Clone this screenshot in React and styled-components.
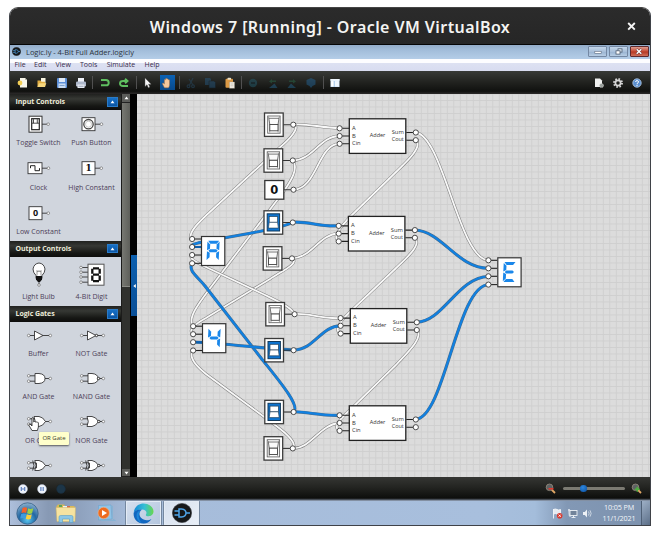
import React from "react";
import styled, { createGlobalStyle, css } from "styled-components";

const UI = `"Open Sans", "Noto Sans", sans-serif`;

const GlobalStyle = createGlobalStyle`
  * { box-sizing: border-box; }
  body { margin: 0; background: #fff; overflow: hidden; font-family: ${UI}; }
  svg { display: block; flex: none; }
`;

/* ---------- window frame ---------- */

const Stage = styled.div`
  width: 660px;
  height: 535px;
  padding: 7px 9px 9px 9px;
`;

const Frame = styled.div`
  width: 642px;
  height: 519px;
  border: 1px solid #3f4248;
  border-top-color: #454545;
  border-radius: 9px 9px 0 0;
  overflow: hidden;
  display: flex;
  flex-direction: column;
`;

const HostBar = styled.header`
  position: relative;
  flex: none;
  height: 37px;
  background: linear-gradient(#2b2b2b, #262626);
  border-bottom: 1px solid #050505;
  display: flex;
  align-items: center;
  justify-content: center;
  color: #f4f4f2;
`;

const HostTitle = styled.h1`
  margin: 0;
  padding-top: 2px;
  font: 600 16px/20px "Noto Sans", sans-serif;
  letter-spacing: ${(p) => p.$track}px;
  white-space: nowrap;
`;

const HostClose = styled.svg`
  position: absolute;
  right: 14px;
  top: 14px;
`;

const GuestBar = styled.div`
  flex: none;
  height: 14px;
  display: flex;
  align-items: center;
  padding: 0 1px 1px 2px;
  background: linear-gradient(#93acc9, #a3bedb 40%, #b4cde7);
`;

const GuestTitle = styled.span`
  margin-left: 5px;
  font: 400 7.5px/12px ${UI};
  letter-spacing: ${(p) => p.$track || 0}px;
  color: #2b3340;
  flex: 1;
  white-space: nowrap;
`;

const CaptionButtons = styled.div`
  display: flex;
  gap: 1.5px;
`;

const CaptionButton = styled.span`
  width: 19.3px;
  height: 11px;
  border: 1px solid ${(p) => (p.$danger ? "#5f2a2e" : "#7488a3")};
  border-radius: 1px;
  background: ${(p) =>
    p.$danger
      ? "linear-gradient(#dd9c8f, #c8513c 45%, #b63a25 55%, #d0705a)"
      : "linear-gradient(#c3d5e9, #a9c0da 50%, #9ab4d1 55%, #b7cde4)"};
  display: flex;
  align-items: center;
  justify-content: center;
`;

const MenuBar = styled.nav`
  flex: none;
  height: 12px;
  display: flex;
  align-items: center;
  padding-left: 4.5px;
  gap: 8.8px;
  background: linear-gradient(#fdfdff 0 30%, #dde1f2 35%, #d8dcf0);
`;

const MenuItem = styled.span`
  width: ${(p) => p.$w}px;
  font: 400 7px/12px ${UI};
  color: #3a2c4c;
  white-space: nowrap;
`;

/* ---------- toolbar ---------- */

const Toolbar = styled.div`
  flex: none;
  height: 23px;
  display: flex;
  align-items: center;
  padding: 0 3px 0 3.4px;
  background: linear-gradient(#383a37, #21221f 50%, #10110f 88%, #2c2a2a);
`;

const Tool = styled.span`
  width: 19.35px;
  height: 15px;
  display: flex;
  align-items: center;
  justify-content: center;
  opacity: ${(p) => (p.$off ? 0.42 : 1)};
  ${(p) =>
    p.$active &&
    css`
      width: 15.3px;
      margin: 0 2px;
      background: linear-gradient(#0c62b4, #07498c);
    `}
`;

const ToolRule = styled.i`
  width: 1px;
  height: 13px;
  margin: 0 1.7px;
  background: #505050;
`;

const Spacer = styled.span`
  flex: 1;
`;

/* ---------- body ---------- */

const Workspace = styled.main`
  flex: none;
  height: 383px;
  display: flex;
  background: #000;
`;

const Palette = styled.aside`
  position: relative;
  width: 111px;
  height: 383px;
  overflow: hidden;
  background: #d0d5dd;
`;

const SectionHead = styled.div`
  height: 16px;
  padding: 0 3px 0 5.5px;
  display: flex;
  align-items: center;
  justify-content: space-between;
  background: linear-gradient(#20211f, #363834 30%, #161714 75%, #0d0d0c);
  color: #ecebd9;
  font: 700 7px/14px ${UI};
  letter-spacing: -0.06px;
`;

const Collapse = styled.span`
  width: 11.5px;
  height: 9.5px;
  border: 0.5px solid #2b7bc7;
  background: linear-gradient(#1670c6, #0a55a4);
  display: flex;
  align-items: center;
  justify-content: center;
`;

const SectionGrid = styled.div`
  display: grid;
  grid-template-columns: 53px 53px;
  grid-auto-rows: ${(p) => p.$row}px;
  height: ${(p) => p.$h}px;
  padding-left: 2px;
`;

const Part = styled.figure`
  margin: 0;
  display: flex;
  flex-direction: column;
  align-items: center;
`;

const PartLabel = styled.figcaption`
  margin-top: ${(p) => p.$gap}px;
  font: 400 7px/9px ${UI};
  letter-spacing: 0;
  color: #4c4058;
  white-space: nowrap;
`;

const PointerHand = styled.svg`
  position: absolute;
  left: 18px;
  top: 322px;
`;

const Tooltip = styled.div`
  position: absolute;
  left: 29px;
  top: 338px;
  width: 30px;
  height: 13px;
  background: #ffffcb;
  border-radius: 1px;
  box-shadow: 0 1px 2px rgba(0, 0, 0, 0.6);
  font: 400 6px/13px ${UI};
  color: #3c3c30;
  text-align: center;
  white-space: nowrap;
`;

const ScrollTrack = styled.div`
  width: 9px;
  height: 383px;
  display: flex;
  flex-direction: column;
  background: #30312e;
  border-left: 1px solid #1c1c1b;
`;

const ScrollArrow = styled.span`
  height: ${(p) => p.$h}px;
  background: #5b5c59;
  border-bottom: 1px solid #222;
  display: flex;
  align-items: center;
  justify-content: center;
`;

const ScrollThumb = styled.span`
  height: 184px;
  background: linear-gradient(90deg, #777872, #5e5f5a);
  border-bottom: 1px solid #8a8b86;
`;

const Divider = styled.div`
  width: 7px;
  padding: 161px 0 0 1px;
`;

const DividerGrip = styled.span`
  width: 6px;
  height: 61px;
  display: flex;
  align-items: center;
  justify-content: center;
  background: linear-gradient(#0c5fae, #0a4f97);
`;

/* ---------- footer bars ---------- */

const PlayBar = styled.div`
  flex: none;
  height: 23px;
  display: flex;
  align-items: center;
  gap: 9.3px;
  padding: 0 8px 0 7.5px;
  background: linear-gradient(#353633, #232421 45%, #0d0e0c 92%, #5a6370);
`;

const ZoomGroup = styled.div`
  display: flex;
  align-items: center;
  gap: 6.5px;
`;

const SliderRail = styled.span`
  width: 62px;
  height: 2.5px;
  border-radius: 2px;
  background: #7b7a72;
  display: flex;
  align-items: center;
  padding-left: 17.5px;
`;

const SliderKnob = styled.i`
  width: 6.5px;
  height: 6.5px;
  border-radius: 50%;
  background: radial-gradient(circle at 40% 35%, #2d86dd, #0a4fa0);
`;

const TaskBar = styled.footer`
  flex: none;
  height: 25px;
  display: flex;
  align-items: center;
  border-top: 1px solid #8390a3;
  background: linear-gradient(90deg, #adbfdb, #8799b4 6%, #8c9fbb 10%, #a6bcda 19%, #a8bfdd 74%, #a4bddb 82%, #8298b5 87%, #7d92ae);
`;

const TaskSlot = styled.span`
  width: ${(p) => p.$w}px;
  height: 24px;
  display: flex;
  align-items: center;
  justify-content: center;
`;

const TaskButton = styled(TaskSlot)`
  margin-right: 1.8px;
  border: 1px solid #74879f;
  border-width: 0 1px;
  border-radius: 1px;
  background: linear-gradient(135deg, #d6e0ee, ${(p) => (p.$lit ? "#e9eff7" : "#b3c5de")});
  box-shadow: inset 0 0 0 1px #e3ebf5;
`;

const Tray = styled.div`
  display: flex;
  align-items: center;
  gap: 4px;
`;

const Clock = styled.div`
  width: 44px;
  margin-left: 4px;
  margin-bottom: 1px;
  text-align: center;
  color: #f3f6fa;
  font: 400 7.2px/10.3px ${UI};
  letter-spacing: -0.12px;
`;

const ShowDesktop = styled.span`
  width: 9px;
  height: 24px;
  border-left: 1px solid #4f6076;
  background: linear-gradient(135deg, #9dafc6, #5c6f88);
`;

/* ---------- small glyphs ---------- */

const UpMark = ({ flip, fill = "#fff" }) => (
  <svg width="5" height="4" viewBox="0 0 5 4">
    <path d={flip ? "M.5.8h4L2.5 3.4z" : "M.5 3.2h4L2.5.6z"} fill={fill} />
  </svg>
);

const toolArt = {
  fresh: (
    <>
      <path d="M3 1h5l2 2v7.500H3z" fill="#f8f6ea" />
      <path d="M8 1v2h2z" fill="#b9b9ae" />
      <circle cx="3" cy="6" r="2.400" fill="#f3cf55" />
    </>
  ),
  open: (
    <>
      <path d="M5 1h4.500v6H5z" fill="#f8f5e2" />
      <path d="M1.500 3.500h3l1 1.300H9V10H1.500z" fill="#e2ae42" />
      <path d="M1.500 10 3 6.300h7.300L9 10z" fill="#f7d77d" />
    </>
  ),
  save: (
    <>
      <rect x="1" y="1" width="10" height="10" rx="1" fill="#5d90d8" />
      <rect x="3" y="1" width="6" height="4" fill="#dfe9f6" />
      <rect x="2.500" y="6.500" width="7" height="4.500" fill="#c9dcf2" />
      <path d="M3.500 8.500h5" stroke="#6b90c0" strokeWidth=".8" />
    </>
  ),
  print: (
    <>
      <path d="M3 1h6v4H3z" fill="#eef1f8" />
      <rect x="1" y="4.500" width="10" height="5" rx="1.300" fill="#aeb8cb" />
      <path d="M2.500 7.500h7V11h-7z" fill="#e8ecf4" />
      <path d="M3.500 9.300h5" stroke="#79869c" strokeWidth=".7" />
    </>
  ),
  undo: <path d="M2 3h5q2.700 0 2.700 2.700T7 8.300H2" fill="none" stroke="#5fc060" strokeWidth="2" />,
  redo: <path d="M10 9H5Q2 9 2 6.500T5 4h4M7 1.800 9.500 4 7 6.200" fill="none" stroke="#5fc060" strokeWidth="1.900" />,
  arrow: <path d="M3 1v8.500l2-1.800 1.300 3 1.500-.7-1.300-2.800h2.700z" fill="#f5f5f5" stroke="#555" strokeWidth=".4" />,
  hand: (
    <path
      d="M3.500 10.800 1.600 7.300Q1 6 2.200 6l1.200 1V2.800q.6-1 1.200 0V1.700q.6-1 1.300 0v.5q.6-1 1.300 0V3q.7-.9 1.300 0v4.800q0 1.500-1 3z"
      fill="#f3c79c"
      stroke="#a96d3d"
      strokeWidth=".5"
    />
  ),
  cut: (
    <g fill="none" stroke="#2b5575" strokeWidth="1.200">
      <path d="M8 1 4.500 8M4 2l4 6" />
      <circle cx="3.500" cy="9.300" r="1.400" />
      <circle cx="8" cy="9.300" r="1.400" />
    </g>
  ),
  copy: (
    <g fill="#27618f">
      <path d="M1 1h5l1 1v6H1z" />
      <path d="M5 4h5l1.500 1.500V11H5z" stroke="#142532" strokeWidth=".6" />
    </g>
  ),
  paste: (
    <>
      <rect x="1.500" y="1.800" width="7.500" height="9" rx="1" fill="#dc9a45" />
      <rect x="3.500" y=".8" width="3.500" height="2" rx=".6" fill="#e9e0c8" />
      <path d="M5.500 5h5v6.300h-5z" fill="#f2f0e8" stroke="#9c9480" strokeWidth=".4" />
      <path d="M6.500 7h3M6.500 8.800h3" stroke="#b3ad9e" strokeWidth=".6" />
    </>
  ),
  minus: (
    <>
      <circle cx="6" cy="6" r="4.200" fill="#24667c" />
      <path d="M4 6h4" stroke="#0d1c28" strokeWidth="1.300" />
    </>
  ),
  rotL: (
    <g fill="#2a7350">
      <path d="M9 3.500H5V2L2 4.500 5 6.500V5h4z" />
      <path d="M2 11h8.500L7.500 6.500z" fill="#27709f" />
    </g>
  ),
  rotR: (
    <g fill="#2a7350">
      <path d="M3 3.500h4V2l3 2.500L7 6.500V5H3z" />
      <path d="M1.500 11h8.500L5 6.500z" fill="#27709f" />
    </g>
  ),
  cube: <path d="M6 1l4.500 2v4.500L7.500 9 6 11 4.500 9 1.500 7.500V3z" fill="#2470ab" />,
  panes: (
    <>
      <rect x="1.500" y="2" width="9" height="8" fill="#d5e8fa" />
      <rect x="1.500" y="2" width="9" height="1.800" fill="#eef6fd" />
      <rect x="2.200" y="4.200" width="2.600" height="5" fill="#fff" />
      <rect x="5.600" y="4.200" width="4.200" height="5" fill="#eef6fd" />
      <path d="M5.200 4v6" stroke="#8ab4df" strokeWidth=".7" />
    </>
  ),
  pageGear: (
    <>
      <path d="M2 1.500h5l2 2V10H2z" fill="#f0f1f0" />
      <circle cx="8.500" cy="8.500" r="2" fill="#9aa09c" stroke="#dadcda" strokeWidth=".8" strokeDasharray="1 .6" />
    </>
  ),
  gear: (
    <>
      <circle cx="6" cy="6" r="4" fill="none" stroke="#d6d6d6" strokeWidth="1.900" strokeDasharray="1.570 1.570" />
      <circle cx="6" cy="6" r="2.600" fill="none" stroke="#d6d6d6" strokeWidth="1.700" />
    </>
  ),
  help: (
    <>
      <circle cx="6" cy="6" r="4.200" fill="#5b8fd0" stroke="#b9d0ec" strokeWidth=".8" />
      <path d="M4.600 5q.1-1.400 1.500-1.400T7.500 5q0 .8-1.400 1.500v.8M6 8v1" fill="none" stroke="#fff" strokeWidth="1" />
    </>
  ),
};

const ToolButton = ({ art, active, off }) => (
  <Tool $active={active} $off={off}>
    <svg width="12" height="12" viewBox="0 0 12 12">
      {toolArt[art]}
    </svg>
  </Tool>
);

/* ---------- palette art, origin at the middle of each cell ---------- */

const ink = { stroke: "#343436", strokeWidth: 0.9 };

const Pin = ({ x, y }) => <circle cx={x} cy={y} r="1.300" fill="#fff" stroke="#555" strokeWidth=".6" />;

const GateFrame = ({ two, children, bubble }) => (
  <g>
    {two ? (
      <>
        <path d="M-9-2.700H-3M-9 2.700H-3" {...ink} />
        <Pin x={-10.3} y={-2.7} />
        <Pin x={-10.3} y={2.7} />
      </>
    ) : (
      <>
        <path d="M-9 0H-4" {...ink} />
        <Pin x={-10.3} y={0} />
      </>
    )}
    <path d={two ? "M5 0h5" : "M3 0h7"} {...ink} />
    <Pin x={11.3} y={0} />
    {children}
    {bubble != null && <circle cx={bubble} cy="0" r="1.200" fill="#fff" stroke="#222" strokeWidth=".9" />}
  </g>
);

const AndShape = <path d="M-4-5H0Q6-4.500 6 0T0 5H-4z" fill="#fff" {...ink} />;
const OrShape = <path d="M-5-5H0Q4-4.500 6.500 0 4 4.500 0 5H-5Q-2.500 0-5-5z" fill="#fff" {...ink} />;
const XorShape = (
  <>
    <path d="M-6.300-5Q-3.800 0-6.300 5" fill="none" {...ink} />
    <path d="M-4.200-5H0Q4-4.500 6.500 0 4 4.500 0 5H-4.200Q-1.700 0-4.200-5z" fill="#fff" {...ink} />
    <path d="M-2.500-2.700v5.400" fill="none" {...ink} />
  </>
);
const BufferShape = <path d="M-4.500-4.500 4 0-4.500 4.500z" fill="#fff" {...ink} />;

const ConstArt = ({ v }) => (
  <>
    <path d="M3 0h5" {...ink} />
    <Pin x={9.3} y={0} />
    <rect x="-10" y="-6.500" width="13" height="13" fill="#fff" {...ink} />
    <text x="-3.500" y="3.200" textAnchor="middle" fontSize="9" fontWeight="700" fontFamily={v === "1" ? "DejaVu Serif" : "Noto Sans"} fill="#111">
      {v}
    </text>
  </>
);

const partArt = {
  toggle: (
    <>
      <path d="M3 0h5" {...ink} />
      <Pin x={9.2} y={0} />
      <rect x="-10" y="-8" width="13" height="16" fill="#fff" stroke="#333" />
      <rect x="-7.300" y="-5.500" width="7.600" height="11" fill="#fff" stroke="#222" strokeWidth="1.200" />
      <path d="M-7-1h7M-5.500-5v4M-1.700-5v4" stroke="#222" strokeWidth=".8" />
    </>
  ),
  push: (
    <>
      <path d="M3 0h5" {...ink} />
      <Pin x={9.5} y={0} />
      <rect x="-10" y="-6.500" width="13" height="13" fill="#fff" {...ink} />
      <circle cx="-3.500" cy="0" r="4.700" fill="#fff" stroke="#444" strokeWidth="1.300" />
      <circle cx="-3.500" cy="0" r="3" fill="none" stroke="#aaa" strokeWidth=".6" />
    </>
  ),
  clock: (
    <>
      <path d="M3 0h5" {...ink} />
      <Pin x={9.5} y={0} />
      <rect x="-11" y="-5.500" width="14" height="11" fill="#fff" {...ink} />
      <path d="M-8.500 0v-2.500h4.500V2.500h4.500V0" fill="none" stroke="#222" strokeWidth="1" />
    </>
  ),
  one: <ConstArt v="1" />,
  zero: <ConstArt v="0" />,
  bulb: (
    <>
      <path d="M0 8v3" {...ink} />
      <Pin x={0} y={11.5} />
      <path d="M-3 2Q-6-1-6-4.500-5-10 0-10.500 5-10 6-4.500 6-1 3 2v3H-3z" fill="#fff" {...ink} />
      <path d="M-2 2v-5l1 1.500 1-1.500 1 1.500 1-1.500v5" fill="none" stroke="#555" strokeWidth=".6" />
      <path d="M-3 2.500h6V6L1 8.500h-2L-3 6z" fill="#111" />
    </>
  ),
  digit: (
    <>
      <path d="M-10-6h7M-10-1.300h7M-10 3.500h7M-10 8.700h7" {...ink} />
      {[-6, -1.3, 3.5, 8.7].map((y) => (
        <Pin key={y} x={-11} y={y} />
      ))}
      <rect x="-4" y="-9.300" width="16" height="21" fill="#fff" stroke="#555" />
      <g stroke="#111" strokeWidth="2.300" fill="none">
        <path d="M1-5.200h6M1 1.200h6M1 7.700h6" />
        <path d="M.3-4.700v5M7.700-4.700v5M.3 2v5.200M7.700 2v5.200" />
      </g>
    </>
  ),
  buffer: <GateFrame>{BufferShape}</GateFrame>,
  not: <GateFrame bubble={4.5}>{BufferShape}</GateFrame>,
  and: <GateFrame two>{AndShape}</GateFrame>,
  nand: <GateFrame two bubble={6.5}>{AndShape}</GateFrame>,
  or: <GateFrame two>{OrShape}</GateFrame>,
  nor: <GateFrame two bubble={6.8}>{OrShape}</GateFrame>,
  xor: <GateFrame two>{XorShape}</GateFrame>,
  xnor: <GateFrame two bubble={6.8}>{XorShape}</GateFrame>,
};

const sections = [
  {
    title: "Input Controls", row: 44.4, h: 130.5, icon: 28.4, gap: 0,
    parts: [["toggle", "Toggle Switch"], ["push", "Push Button"], ["clock", "Clock"], ["one", "High Constant"], ["zero", "Low Constant"]],
  },
  {
    title: "Output Controls", row: 49.5, h: 49.5, icon: 33, gap: 2.5,
    parts: [["bulb", "Light Bulb"], ["digit", "4-Bit Digit"]],
  },
  {
    title: "Logic Gates", row: 43.2, h: 200, icon: 27, gap: 0.2,
    parts: [
      ["buffer", "Buffer"], ["not", "NOT Gate"], ["and", "AND Gate"], ["nand", "NAND Gate"],
      ["or", "OR Gate"], ["nor", "NOR Gate"], ["xor"], ["xnor"],
    ],
  },
];

/* ---------- circuit ---------- */

const Wire = ({ d, on }) => (
  <g fill="none" strokeLinecap="round">
    <path d={d} stroke={on ? "#4a6b88" : "#838383"} strokeWidth={on ? 3.1 : 2.9} />
    <path d={d} stroke={on ? "#1180e0" : "#f8f8f8"} strokeWidth={on ? 2.2 : 1.8} />
  </g>
);

const Port = ({ x, y }) => <circle cx={x} cy={y} r="2.600" fill="#fff" stroke="#4a4a4a" strokeWidth="1" />;

const Toggle = ({ x, y, on }) => (
  <g>
    <path d={`M${x + 19} ${y + 12.2}h8`} stroke="#333" strokeWidth="1.100" />
    <rect x={x + 0.5} y={y + 0.5} width="18.700" height="23.400" fill="#fff" stroke="#3a3a3a" strokeWidth="1.300" />
    {on ? (
      <>
        <rect x={x + 3.7} y={y + 3.5} width="12.400" height="17.200" fill="#0d74d0" stroke="#123a5c" strokeWidth="1" />
        <rect x={x + 5.7} y={y + 6.3} width="8.400" height="5.700" fill="#fff" stroke="#26435c" strokeWidth=".7" />
        <path d={`M${x + 5.7} ${y + 12}h8.400l.8 5.800h-10z`} fill="#fff" stroke="#26435c" strokeWidth=".7" />
      </>
    ) : (
      <>
        <rect x={x + 3.7} y={y + 3.5} width="12.400" height="17.200" fill="#fff" stroke="#666" strokeWidth=".9" />
        <path d={`M${x + 4} ${y + 4}l1.700 2.500v13.500M${x + 15.8} ${y + 4}l-1.700 2.500v13.500`} fill="none" stroke="#777" strokeWidth=".7" />
        <path d={`M${x + 4.8} ${y + 5.8}h10.200l-1 6.200h-8.200z`} fill="#fafafa" stroke="#555" strokeWidth=".8" />
        <rect x={x + 5.8} y={y + 12} width="8.200" height="6.300" fill="#fff" stroke="#444" strokeWidth=".9" />
      </>
    )}
    <Port x={x + 29.3} y={y + 12.2} />
  </g>
);

const Adder = ({ x, y }) => (
  <g fontFamily="Open Sans" fontSize="5.800" fill="#333">
    <path d={`M${x - 8} ${y + 9.5}h8M${x - 8} ${y + 17.2}h8M${x - 8} ${y + 25}h8M${x + 57} ${y + 13.7}h8M${x + 57} ${y + 21.4}h8`} stroke="#222" strokeWidth="1.100" />
    <rect x={x} y={y} width="56.500" height="34.600" fill="#fff" stroke="#222" strokeWidth="1.300" />
    <text x={x + 2.7} y={y + 10.8}>A</text>
    <text x={x + 2.7} y={y + 18.8}>B</text>
    <text x={x + 2.7} y={y + 26.2}>Cin</text>
    <text x={x + 28.3} y={y + 18.6} textAnchor="middle" fontSize="5.500">Adder</text>
    <text x={x + 54.5} y={y + 15.1} textAnchor="end">Sum</text>
    <text x={x + 54.5} y={y + 22.6} textAnchor="end" fontSize="5.500">Cout</text>
    {[9.5, 17.2, 25].map((dy) => (
      <Port key={dy} x={x - 9.7} y={y + dy} />
    ))}
    {[13.7, 21.4].map((dy) => (
      <Port key={dy} x={x + 66.5} y={y + dy} />
    ))}
  </g>
);

/* Seven segments, clockwise from the top, then the middle bar. */
const segments = {
  a: "M1 0h11l-2.300 3H3.300z",
  b: "M12.500.8v8.700L9.700 8V3.700z",
  c: "M12.500 10.500v8.700L9.700 16.500v-4.500z",
  d: "M1 20h11l-2.300-3H3.300z",
  e: "M.3 10.500v8.700l2.900-2.700v-4.500z",
  f: "M.3.800v8.700L3.200 8V3.700z",
  g: "M1.700 10 3.200 8.500h6.300l1.500 1.500-1.500 1.500H3.200z",
};

const Digit = ({ x, y, lit, active = [] }) => (
  <g>
    {[3, 11, 19, 27.3].map((dy, i) => (
      <path key={dy} d={`M${x - 7} ${y + dy}h7`} stroke={active.includes(i) ? "#0d5fae" : "#222"} strokeWidth={active.includes(i) ? 2 : 1.1} />
    ))}
    <rect x={x + 0.5} y={y + 0.5} width="23.300" height="29" fill="#fff" stroke="#333" strokeWidth="1.200" />
    <g transform={`translate(${x + 6.2} ${y + 4.8}) skewX(-3)`} fill="#1a87ea">
      {[...lit].map((s) => (
        <path key={s} d={segments[s]} />
      ))}
    </g>
    {[3, 11, 19, 27.3].map((dy) => (
      <Port key={dy} x={x - 8.9} y={y + dy} />
    ))}
  </g>
);

const wires = [
  ["M293.300 124.700C301 127 290 139 278 149L212 210C201 220 186 234 192 239"],
  ["M293 160.500C299 169 290 182 284 191L211 287C199 303 187 318 193 326"],
  ["M292 258.300C300 263 282 271 270 279L206 318C197 323 187 330 193 334"],
  ["M294.700 314C290 306 275 300 263 294L208 268C198 263 188 259 192 255"],
  ["M293 448.300C298 442 282 430 271 422L206 374C196 366 188 357 193 350.300"],
  ["M293.300 124.700C306 123 322 128 339.500 128"],
  ["M293 160.500C313 160 320 136 339.500 136"],
  ["M293.500 189.700C317 189 318 144 339.500 143.700"],
  ["M292 258.300C312 258 319 234 338.600 233.500"],
  ["M294.700 314C309 313 322 319 340.400 318"],
  ["M293 448.300C311 449 320 424 339.500 423"],
  ["M415.700 140.500C424 147 403 165 394 174L352 215C340 227 332 238 338.600 241"],
  ["M414.700 238C423 245 403 261 394 270L353 309C342 319 333 330 340.400 333.300"],
  ["M416.600 330C425 337 405 355 396 365L353 407C341 418 332 427 339.500 430.700"],
  ["M415.700 132.500C443 136 459 258 488 260.300"],
  ["M293 222.300C280 228 262 231 246 234L207 241C199 243 190 244 192 247", 1],
  ["M293.700 411.700C301 406 276 377 261 358L205 286C197 276 188 271 192 263.500", 1],
  ["M293.700 350C270 349 220 343 193 342", 1],
  ["M293 222.300C309 221 319 227 338.600 225.800", 1],
  ["M293.700 350C314 350 321 326 340.400 325.800", 1],
  ["M293.700 411.700C309 412 321 416 339.500 415.300", 1],
  ["M414.700 230C442 231 457 268 488.600 268.300", 1],
  ["M416.600 322.200C443 322 458 277 488.600 276.500", 1],
  ["M415.800 419.300C445 417 457 285 488.600 284.700", 1],
];

const Circuit = () => (
  <svg width="513" height="383" viewBox="137 94 513 383">
    <defs>
      <pattern id="mesh" x="141.300" y="93.500" width="6.500" height="6.500" patternUnits="userSpaceOnUse">
        <path d="M0 .5H6.500M.5 0V6.500" stroke="#cfcfcf" strokeWidth="1" />
      </pattern>
    </defs>
    <rect x="137" y="94" width="513" height="383" fill="#dcdcdc" />
    <rect x="137" y="94" width="513" height="383" fill="url(#mesh)" />
    {wires.map(([d, on]) => (
      <Wire key={d} d={d} on={on} />
    ))}
    <Toggle x={264} y={112.5} />
    <Toggle x={263.5} y={148.3} />
    <path d="M284 189.700h8" stroke="#333" strokeWidth="1.100" />
    <rect x="264.800" y="180.500" width="19" height="18.700" fill="#fff" stroke="#333" strokeWidth="1.300" />
    <text x="274.300" y="193.900" textAnchor="middle" fontFamily="DejaVu Sans" fontWeight="700" fontSize="11.500" fill="#111">
      0
    </text>
    <Port x={293.5} y={189.7} />
    <Toggle x={263.5} y={210.3} on />
    <Toggle x={262.7} y={246.2} />
    <Toggle x={265.3} y={302} />
    <Toggle x={264.3} y={338} on />
    <Toggle x={264.3} y={399.8} on />
    <Toggle x={263.5} y={436.2} />
    <Adder x={349.3} y={118.8} />
    <Adder x={348.4} y={216.4} />
    <Adder x={350.3} y={308.6} />
    <Adder x={349.3} y={405.8} />
    <Digit x={201} y={236} lit="abcefg" active={[1]} />
    <Digit x={202} y={323.2} lit="bcfg" active={[2]} />
    <Digit x={497.3} y={257.3} lit="adefg" />
  </svg>
);

/* ---------- desktop icons ---------- */

const GateBadge = ({ size }) => (
  <svg width={size} height={size} viewBox="0 0 20 20">
    <circle cx="10" cy="10" r="9.600" fill="#16181a" stroke="#34383c" strokeWidth=".6" />
    <path d="M2.500 8h4M2.500 12h4M14 10h4M7 6h2.500Q14 6.500 14 10t-4.500 4H7z" fill="none" stroke="#4fa5ea" strokeWidth="1.500" />
  </svg>
);

const StartOrb = () => (
  <svg width="23" height="23" viewBox="0 0 23 23">
    <defs>
      <radialGradient id="orb" cx=".5" cy=".8" r=".8">
        <stop offset="0" stopColor="#59c4ee" />
        <stop offset=".5" stopColor="#2267a3" />
        <stop offset="1" stopColor="#8fb3cf" />
      </radialGradient>
    </defs>
    <circle cx="11.500" cy="11.500" r="10.700" fill="url(#orb)" stroke="#2f587f" strokeWidth=".7" />
    <path d="M6.500 6q2.500-1.300 4.700 0l-1 5q-2.200-1.200-4.800 0z" fill="#f0622d" />
    <path d="M12 6.300q2.300 1.300 5.300 0l-1.200 5q-2.500 1.200-5 0z" fill="#9fcf45" />
    <path d="M5.200 12q2.400-1.200 4.800 0l-1 4.500q-2.200-1.200-4.800 0z" fill="#3d9be0" />
    <path d="M10.800 12.300q2.500 1.200 5 0l-1 4.500q-2.500 1.200-5 0z" fill="#fbcf3c" />
  </svg>
);

const FolderIcon = () => (
  <svg width="22" height="21" viewBox="0 0 22 21">
    <path d="M1.500 3 3 1.500h6L10 3h9.500v3H1.500z" fill="#d9b856" />
    <path d="M4 2h3v2H4z" fill="#5ea45a" />
    <path d="M8 3h4v2H8z" fill="#e9f1f6" />
    <path d="M12 3h3v2h-3z" fill="#d56a4b" />
    <path d="M1 4.500h19.500L20 18.500H2z" fill="#f6e3a0" stroke="#d2b467" strokeWidth=".5" />
    <path d="M4 19.500V14q0-1.500 1.500-1.500h11Q18 12.500 18 14v5.500h-3.500V16h-7v3.500z" fill="#8cc7e6" stroke="#5a9fc6" strokeWidth=".6" />
  </svg>
);

const MediaIcon = () => (
  <svg width="20" height="18" viewBox="0 0 20 18">
    <path d="M2.500 1.500 15 1l1 14-13.500 1z" fill="#8fc3e6" stroke="#6ba3cd" strokeWidth=".6" />
    <path d="M15 3 16.500 2v13l3 1.500H5" fill="none" stroke="#83b2d4" strokeWidth=".9" />
    <circle cx="7.700" cy="9" r="5.700" fill="#ee6b1f" stroke="#f7b184" strokeWidth=".6" />
    <path d="M6 6v6l5-3z" fill="#fff" />
  </svg>
);

const EdgeIcon = () => (
  <svg width="21" height="21" viewBox="0 0 21 21">
    <defs>
      <linearGradient id="edgeTop" x1="0" x2="1">
        <stop offset="0" stopColor="#1688d6" />
        <stop offset=".55" stopColor="#35bfd4" />
        <stop offset="1" stopColor="#68d84b" />
      </linearGradient>
    </defs>
    <path d="M.7 9.500C1.500 3.500 6 .5 10.500.5c6 0 10 4 10 8 0 3-2.500 4.700-5 4.700-2.300 0-3-1-2.500-1.800C14.500 9 12.500 6.700 9 6.500 5 6.400 2 8 .7 9.500z" fill="url(#edgeTop)" />
    <path d="M.6 10C2.500 6.500 6.500 6.200 9 6.700 6 8 5.700 12 8 14.800c2.500 3 7.500 3 10.500 1.200-2 3.200-5 4.600-8 4.500C4.500 20.400.3 16 .6 10z" fill="#1267c0" />
    <path d="M8.500 7C5.500 8.500 4 14 8.500 20c-3-1-5-4-5-7.500C3.500 9.500 5.500 7.500 8.500 7z" fill="#1d86d8" />
  </svg>
);

const RoundControl = ({ kind }) => (
  <svg width="10" height="10" viewBox="0 0 10 10">
    <circle cx="5" cy="5" r="4.500" fill={kind === "stop" ? "#1c3547" : "#eef3fb"} stroke={kind === "stop" ? "#182a38" : "#c2cbe0"} strokeWidth=".4" />
    {kind === "step" && <path d="M3.300 3v4M6.700 3v4M4 5h2" stroke="#5e80bd" strokeWidth="1.200" />}
    {kind === "pause" && <path d="M3.900 3v4M6.200 3v4" stroke="#5e80bd" strokeWidth="1.200" />}
  </svg>
);

const Magnifier = ({ plus }) => (
  <svg width="11" height="11" viewBox="0 0 11 11">
    <path d="M6.500 6.500 10 10" stroke="#e0a765" strokeWidth="1.800" />
    <circle cx="4.500" cy="4.300" r="3.300" fill="#5e6264" stroke="#8f8678" strokeWidth=".9" />
    <path d={plus ? "M3.800 6.200h5M6.300 3.800v5" : "M3.500 5.800h5"} stroke={plus ? "#4fae3f" : "#e0392f"} strokeWidth="1.600" />
  </svg>
);

const TrayFlag = () => (
  <svg width="11" height="11" viewBox="0 0 11 11">
    <path d="M1.500 1v9.500M1.500 1.500q2-1 3.500 0t3.500 0V6Q6.500 7 5 6t-3.500 0" fill="#e5eaf1" stroke="#f4f6f9" strokeWidth=".9" />
    <circle cx="7.700" cy="7.700" r="2.800" fill="#d63a30" />
    <path d="m6.600 6.600 2.200 2.200M8.800 6.600 6.600 8.800" stroke="#fff" strokeWidth=".9" />
  </svg>
);

const TrayNet = () => (
  <svg width="11" height="11" viewBox="0 0 11 11">
    <rect x="3" y="2.500" width="7" height="5" fill="#71839a" stroke="#edf1f6" strokeWidth=".9" />
    <path d="M4.500 9.500h4M6.500 7.500v2M2 1v3.500Q2 9 3.500 9M1 2h2" fill="none" stroke="#edf1f6" strokeWidth=".9" />
  </svg>
);

const TraySound = () => (
  <svg width="11" height="11" viewBox="0 0 11 11">
    <path d="M1 4h1.800L5 1.500v8L2.800 7H1z" fill="#edf1f6" />
    <path d="M6.500 3.500q1.300 2 0 4M8 2.300q2.300 3.200 0 6.400" fill="none" stroke="#dde4ed" strokeWidth=".8" />
  </svg>
);

/* ---------- page ---------- */

const menu = [["File", 10.8], ["Edit", 12.7], ["View", 15.5], ["Tools", 18], ["Simulate", 29], ["Help", 16]];

export default function App() {
  return (
    <Stage>
      <GlobalStyle />
      <Frame>
        <HostBar>
          <HostTitle $track={0.42}>Windows 7 [Running] - Oracle VM VirtualBox</HostTitle>
          <HostClose width="9" height="9" viewBox="0 0 9 9">
            <path d="M1.200 1l6.600 6.600M7.800 1 1.200 7.600" stroke="#f5f5f5" strokeWidth="1.900" />
          </HostClose>
        </HostBar>
        <GuestBar>
          <GateBadge size={9} />
          <GuestTitle $track={-0.03}>Logic.ly - 4-Bit Full Adder.logicly</GuestTitle>
          <CaptionButtons>
            <CaptionButton>
              <svg width="8" height="7" viewBox="0 0 8 7"><rect x=".8" y="3.300" width="6.400" height="2" fill="#fff" stroke="#5d6c80" strokeWidth=".6" /></svg>
            </CaptionButton>
            <CaptionButton>
              <svg width="8" height="7" viewBox="0 0 8 7">
                <rect x="3" y=".8" width="4" height="3.300" fill="#dce6f1" stroke="#4d5c70" strokeWidth=".8" />
                <rect x="1" y="2.800" width="4" height="3.300" fill="#fff" stroke="#4d5c70" strokeWidth=".8" />
              </svg>
            </CaptionButton>
            <CaptionButton $danger>
              <svg width="8" height="7" viewBox="0 0 8 7">
                <path d="M1.500 1 6.500 6M6.500 1 1.500 6" stroke="#6b3535" strokeWidth="2.400" />
                <path d="M1.700 1.200 6.300 5.800M6.300 1.200 1.700 5.800" stroke="#fff" strokeWidth="1.400" />
              </svg>
            </CaptionButton>
          </CaptionButtons>
        </GuestBar>
        <MenuBar>
          {menu.map(([name, w]) => (
            <MenuItem key={name} $w={w}>{name}</MenuItem>
          ))}
        </MenuBar>
        <Toolbar>
          <ToolButton art="fresh" />
          <ToolButton art="open" />
          <ToolButton art="save" />
          <ToolButton art="print" />
          <ToolRule />
          <ToolButton art="undo" />
          <ToolButton art="redo" />
          <ToolRule />
          <ToolButton art="arrow" />
          <ToolButton art="hand" active />
          <ToolRule />
          <ToolButton art="cut" off />
          <ToolButton art="copy" off />
          <ToolButton art="paste" />
          <ToolRule />
          <ToolButton art="minus" off />
          <ToolButton art="rotL" off />
          <ToolButton art="rotR" off />
          <ToolButton art="cube" off />
          <ToolRule />
          <ToolButton art="panes" />
          <Spacer />
          <ToolButton art="pageGear" />
          <ToolButton art="gear" />
          <ToolButton art="help" />
        </Toolbar>
        <Workspace>
          <Palette>
            {sections.map((s) => (
              <React.Fragment key={s.title}>
                <SectionHead>
                  {s.title}
                  <Collapse><UpMark /></Collapse>
                </SectionHead>
                <SectionGrid $row={s.row} $h={s.h}>
                  {s.parts.map(([art, label]) => (
                    <Part key={art}>
                      <svg width="44" height={s.icon} viewBox={`-22 ${-s.icon / 2} 44 ${s.icon}`}>{partArt[art]}</svg>
                      {label && <PartLabel $gap={s.gap}>{label}</PartLabel>}
                    </Part>
                  ))}
                </SectionGrid>
              </React.Fragment>
            ))}
            <PointerHand width="13" height="16" viewBox="0 0 13 16">
              <path
                d="M4 14.500 1 9.500Q.5 7.800 2 8l2 2V2q.8-1.500 1.700 0v4q.8-1 1.600 0 .9-.8 1.600.3.900-.6 1.500.5V11l-1 3.500z"
                fill="#fff"
                stroke="#222"
                strokeWidth=".8"
              />
            </PointerHand>
            <Tooltip>OR Gate</Tooltip>
          </Palette>
          <ScrollTrack>
            <ScrollArrow $h={9}><UpMark /></ScrollArrow>
            <ScrollThumb />
            <Spacer />
            <ScrollArrow $h={8}><UpMark flip /></ScrollArrow>
          </ScrollTrack>
          <Divider>
            <DividerGrip>
              <svg width="3" height="4" viewBox="0 0 3 4"><path d="M2.800 0v4L.3 2z" fill="#fff" /></svg>
            </DividerGrip>
          </Divider>
          <Circuit />
        </Workspace>
        <PlayBar>
          <RoundControl kind="step" />
          <RoundControl kind="pause" />
          <RoundControl kind="stop" />
          <Spacer />
          <ZoomGroup>
            <Magnifier />
            <SliderRail><SliderKnob /></SliderRail>
            <Magnifier plus />
          </ZoomGroup>
        </PlayBar>
        <TaskBar>
          <TaskSlot $w={34}><StartOrb /></TaskSlot>
          <TaskSlot $w={43}><FolderIcon /></TaskSlot>
          <TaskSlot $w={37.5}><MediaIcon /></TaskSlot>
          <TaskButton $w={37}><EdgeIcon /></TaskButton>
          <TaskButton $w={37} $lit><GateBadge size={20} /></TaskButton>
          <Spacer />
          <Tray>
            <TrayFlag />
            <TrayNet />
            <TraySound />
          </Tray>
          <Clock>10:05 PM<br />11/1/2021</Clock>
          <ShowDesktop />
        </TaskBar>
      </Frame>
    </Stage>
  );
}
